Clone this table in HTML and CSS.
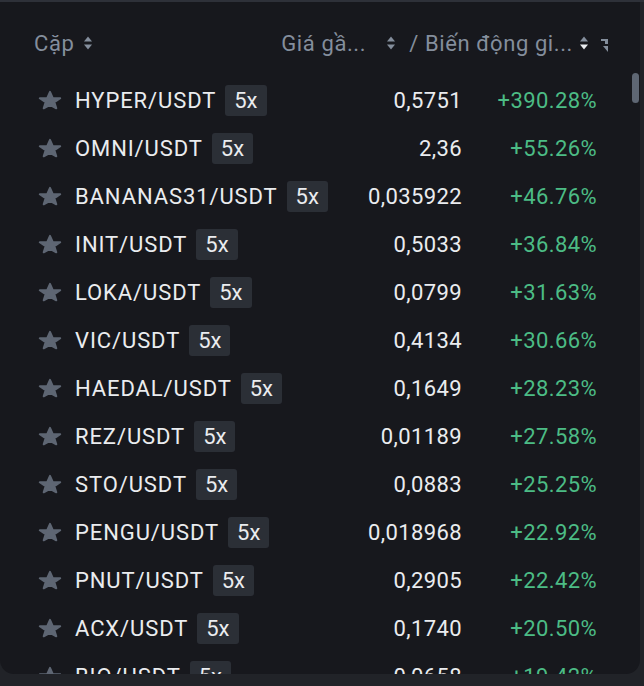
FILE: index.html
```html
<!DOCTYPE html>
<html lang="vi">
  <head>
    <meta charset="UTF-8" />
    <meta name="viewport" content="width=device-width, initial-scale=1.0" />
    <title>Thị trường</title>
    <link rel="stylesheet" href="styles.css">
  </head>
  <body>
    <div class="topbar"></div>
    <div class="panel">
      <div class="head">
        <div class="head-pair">
          <span>Cặp</span>
          <svg class="sort" viewBox="0 0 10 18"><path d="M1 7.5L5 2.5 9 7.5z" /><path d="M1 10.5L5 15.5 9 10.5z" /></svg>
        </div>
        <div class="head-right">
          <span>Giá gầ...</span>
          <svg class="sort sort-gap" viewBox="0 0 10 18"><path d="M1 7.5L5 2.5 9 7.5z" /><path d="M1 10.5L5 15.5 9 10.5z" /></svg>
          <span>/ Biến động gi...</span>
          <svg class="sort sort-near" viewBox="0 0 10 18"><path d="M1 7.5L5 2.5 9 7.5z" /><path class="on" d="M1 10.5L5 15.5 9 10.5z" /></svg>
          <span class="col-icon">
            <svg viewBox="0 0 8 18"><path d="M0 3h7v5H4V5H0z" /><path d="M7 10v6L2 10z" /></svg>
          </span>
        </div>
      </div>

      <!-- market rows -->
      <div class="rows" id="rows"></div>

      <div class="scroll-thumb"></div>
    </div>

    <script>
      const markets = [
        ["HYPER/USDT", "0,5751", "+390.28%"],
        ["OMNI/USDT", "2,36", "+55.26%"],
        ["BANANAS31/USDT", "0,035922", "+46.76%"],
        ["INIT/USDT", "0,5033", "+36.84%"],
        ["LOKA/USDT", "0,0799", "+31.63%"],
        ["VIC/USDT", "0,4134", "+30.66%"],
        ["HAEDAL/USDT", "0,1649", "+28.23%"],
        ["REZ/USDT", "0,01189", "+27.58%"],
        ["STO/USDT", "0,0883", "+25.25%"],
        ["PENGU/USDT", "0,018968", "+22.92%"],
        ["PNUT/USDT", "0,2905", "+22.42%"],
        ["ACX/USDT", "0,1740", "+20.50%"],
        ["BIO/USDT", "0,0658", "+19.42%"],
      ];

      const star =
        '<svg class="star" viewBox="0 0 24 20"><polygon points="12,1.9 14.7,7.9 22.2,8.2 16.4,12.2 18.3,18.3 12,14.8 5.7,18.3 7.6,12.2 1.8,8.2 9.3,7.9" /></svg>';

      const rows = document.getElementById("rows");
      markets.forEach(([pair, price, change]) => {
        const row = document.createElement("div");
        row.className = "row";
        row.innerHTML = `
          <div class="pair">${star}<span class="name">${pair}</span><span class="badge">5x</span></div>
          <div class="price">${price}</div>
          <div class="change">${change}</div>`;
        rows.appendChild(row);
      });
    </script>
  </body>
</html>
```

FILE: styles.css
```css
body {
  margin: 0;
  background-color: #212328;
  font-family: Roboto, "Liberation Sans", sans-serif;
  height: 686px;
  overflow: hidden;
}

.topbar {
  height: 2px;
  background-color: #2e3139;
}

.panel {
  position: relative;
  width: 640px;
  height: 672px;
  padding-top: 17px;
  box-sizing: border-box;
  background-color: #17181d;
  border-radius: 0 0 14px 14px;
  overflow: hidden;
}

/* Header */
.head {
  display: flex;
  align-items: center;
  justify-content: space-between;
  height: 48px;
  margin-bottom: 9px;
  padding: 0 31px 0 34px;
  font-size: 22px;
  letter-spacing: 0.6px;
  color: #848e9c;
}

.head-pair,
.head-right {
  display: flex;
  align-items: center;
}

.sort {
  width: 10px;
  height: 18px;
  margin-left: 9px;
  fill: #848e9c;
}

.sort .on {
  fill: #eaecef;
}

.sort-gap {
  margin-left: 20px;
  margin-right: 13px;
}

.sort-near {
  margin-left: 6px;
}

.col-icon {
  display: block;
  width: 8px;
  height: 18px;
  margin-left: 12px;
  overflow: hidden;
}

.col-icon svg {
  width: 8px;
  height: 18px;
  fill: #848e9c;
}

/* Rows */
.row {
  display: grid;
  grid-template-columns: 1fr 130px 135px;
  align-items: center;
  height: 48px;
  padding: 0 43px 0 38px;
  font-size: 22px;
  color: #eaecef;
}

.pair {
  display: flex;
  align-items: center;
}

.star {
  width: 24px;
  height: 20px;
  margin-right: 13px;
  fill: #5e6673;
  stroke: #5e6673;
  stroke-width: 2;
  stroke-linejoin: round;
}

.name {
  letter-spacing: 0.9px;
}

.badge {
  margin-left: 9px;
  padding: 0 9px;
  height: 31px;
  line-height: 31px;
  background-color: #2b2f36;
  border-radius: 3px;
}

.price,
.change {
  text-align: right;
  letter-spacing: 0.4px;
}

.change {
  color: #4cbc85;
}

.scroll-thumb {
  position: absolute;
  top: 71px;
  left: 632px;
  width: 7px;
  height: 30px;
  border-radius: 4px;
  background-color: #5e6673;
}
```
